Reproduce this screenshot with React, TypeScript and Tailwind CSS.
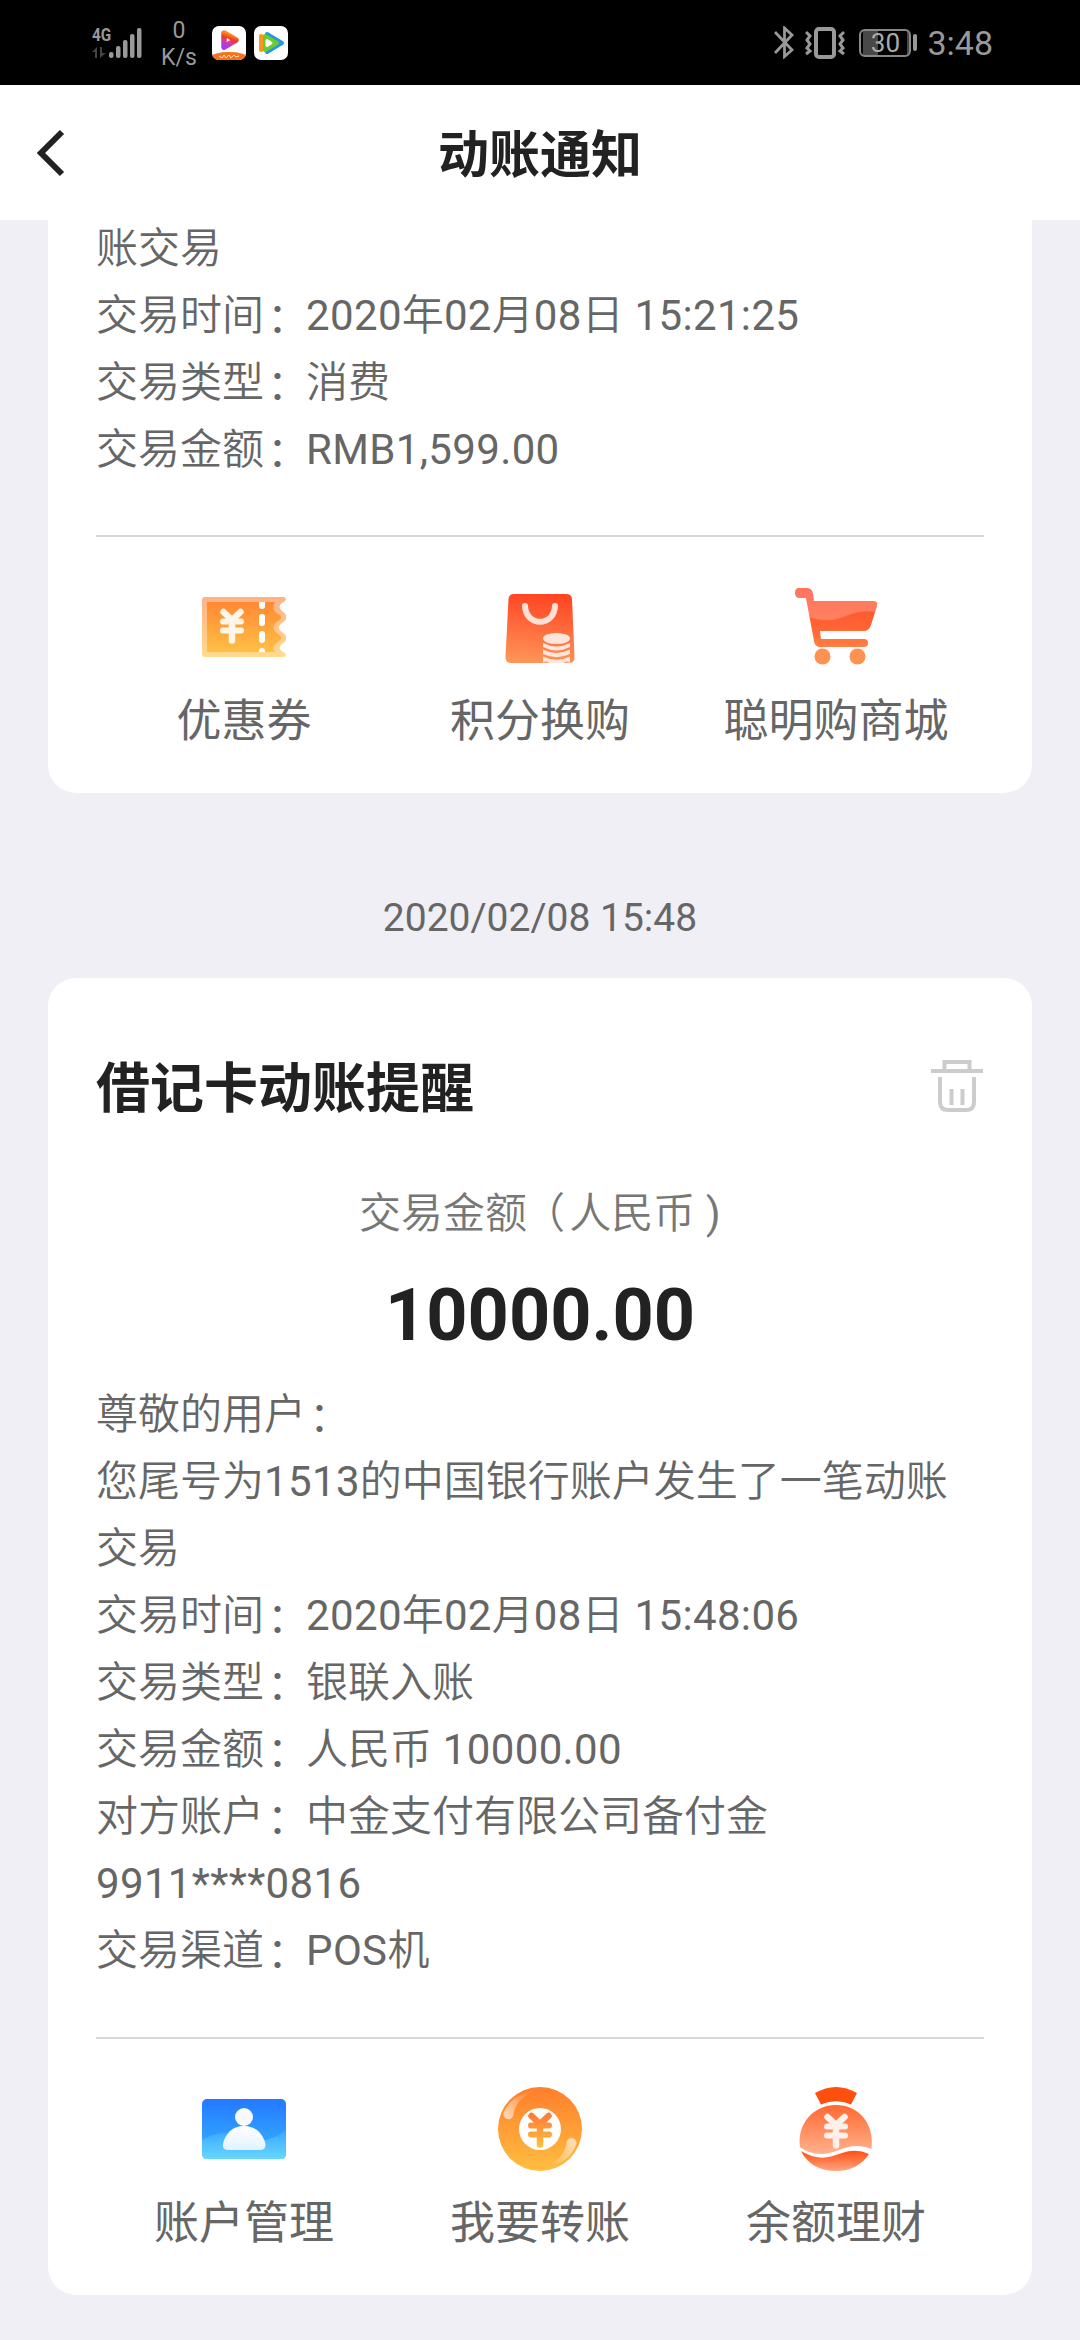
import { Fragment, type ReactNode } from "react"

type Action = {
  label: string
  icon: ReactNode
}

const SIGNAL_BARS = [
  { x: 0, y: 24, h: 6 },
  { x: 7, y: 18, h: 12 },
  { x: 14, y: 12, h: 18 },
  { x: 21, y: 6, h: 24 },
  { x: 28, y: 0, h: 30 },
]

const firstLines = [
  "账交易",
  "交易时间：2020年02月08日 15:21:25",
  "交易类型：消费",
  "交易金额：RMB1,599.00",
]

const secondLines = [
  "尊敬的用户：",
  "您尾号为1513的中国银行账户发生了一笔动账",
  "交易",
  "交易时间：2020年02月08日 15:48:06",
  "交易类型：银联入账",
  "交易金额：人民币 10000.00",
  "对方账户：中金支付有限公司备付金",
  "9911****0816",
  "交易渠道：POS机",
]

// Latin runs are tracked a little wider, full-width punctuation is nudged into place
function Mixed({ text }: { text: string }) {
  return (
    <>
      {text.split(/([\x20-\x7e]+|：|（)/).map((part, idx) => {
        if (idx % 2 === 0) return <Fragment key={idx}>{part}</Fragment>
        if (part === "：") return <span key={idx} className="inline-block translate-x-[3px] translate-y-[3px]">{part}</span>
        if (part === "（") return <span key={idx} className="mr-[4px] ml-[17px] inline-block [font-feature-settings:'halt']">{part}</span>
        return <span key={idx} className="tracking-[0.35px]">{part}</span>
      })}
    </>
  )
}

function Yen({ x, y, stroke }: { x: number; y: number; stroke: string }) {
  return (
    <g transform={`translate(${x} ${y})`} fill="none" stroke={stroke} strokeLinecap="round" strokeLinejoin="round">
      <path d="M-8.5 -14 L0 -6 L8.5 -14" strokeWidth="6.5" />
      <path d="M-9 -4.5 H9 M-9 4.5 H9" strokeWidth="6" />
      <path d="M0 -6 V14.5" strokeWidth="6.5" />
    </g>
  )
}

function CouponIcon() {
  return (
    <svg className="size-[84px]" viewBox="0 0 84 84">
      <defs>
        <linearGradient id="coupon" x1="0" y1="0" x2="0" y2="1">
          <stop offset="0" stopColor="#ff8833" />
          <stop offset="1" stopColor="#ffc044" />
        </linearGradient>
        <linearGradient id="couponEdge" x1="0" y1="0" x2="0" y2="1">
          <stop offset="0" stopColor="#ffb184" />
          <stop offset="1" stopColor="#ffdb8e" />
        </linearGradient>
      </defs>
      <path
        d="M3 12 H82 Q85 13 83 16 C77 19 76 22 80 26 C86 30 86 34 80 38 C76 41 76 44 80 47 C86 51 86 55 80 59 C76 63 77 65 83 68 Q85 71 82 72 H3 Q0 72 0 69 V15 Q0 12 3 12Z"
        fill="url(#couponEdge)"
      />
      <path
        d="M5 17 H73 C70 22 71 26 76 29 C80 31 80 34 76 36 C70 40 70 45 76 49 C80 52 80 54 76 57 C71 60 70 63 73 67 H5Z"
        fill="url(#coupon)"
      />
      <g fill="#fff">
        <path d="M57 17 h6 v4 a3 3 0 0 1 -6 0z M57 67 v-1 a3 3 0 0 1 6 0 v1z" />
        <rect x="57" y="29" width="6" height="12" rx="3" />
        <rect x="57" y="46" width="6" height="12" rx="3" />
      </g>
      <Yen x={30} y={41} stroke="#fff5ea" />
    </svg>
  )
}

function BagIcon() {
  return (
    <svg className="size-[84px]" viewBox="0 0 84 84">
      <defs>
        <linearGradient id="bag" x1="0.5" y1="0" x2="0.4" y2="1">
          <stop offset="0" stopColor="#ff4422" />
          <stop offset="1" stopColor="#ff9558" />
        </linearGradient>
      </defs>
      <path d="M16 9 H68 Q73.500 9 74 14 L76.500 72 Q76.500 78 71 78 H13 Q7.500 78 7.500 72 L10.500 14 Q11 9 16 9Z" fill="url(#bag)" />
      <path d="M27 21 C28 42 56 42 57 21" fill="none" stroke="#ffe0d6" strokeWidth="6" strokeLinecap="round" />
      <g fill="#ffe4da">
        <ellipse cx="58.500" cy="53.500" rx="13.500" ry="5.500" />
        <path d="M45 58 Q58.500 65 72 58 V62 Q58.500 69 45 62Z" />
        <path d="M45 64.500 Q58.500 71.500 72 64.500 V69 Q58.500 75.500 45 69Z" />
        <path d="M45 71.500 Q58.500 78 72 71.500 V78 H45Z" />
      </g>
      <path d="M45 77.500 Q48 75.500 51 78Z M66 78 Q69 75.500 72 77.500Z" fill="#ff8a55" />
    </svg>
  )
}

function CartIcon() {
  return (
    <svg className="size-[84px]" viewBox="0 0 84 84">
      <defs>
        <linearGradient id="cart" x1="0" y1="0" x2="0" y2="84" gradientUnits="userSpaceOnUse">
          <stop offset="0" stopColor="#ff4b30" />
          <stop offset="0.5" stopColor="#ff6334" />
          <stop offset="1" stopColor="#ff9f58" />
        </linearGradient>
      </defs>
      <path
        d="M5 3 H13 Q18 3 19 9 L20 16 H79 Q84 16 83 21 L77 40 Q75 46 70 46 H26 L27 54 H70 Q74 54 74 58 Q74 62 70 62 H26 Q21 62 20 56 L12 13 H6 Q1 13 1 8 Q1 3 5 3Z"
        fill="url(#cart)"
      />
      <path
        d="M5 3 H13 Q18 3 19 9 L20 16 H79 Q84 16 83 21 L81 27 C60 23 50 35 34 35 Q22 35 15.500 32 L12 13 H6 Q1 13 1 8 Q1 3 5 3Z"
        fill="#fff"
        opacity="0.22"
      />
      <circle cx="28.500" cy="71.500" r="8" fill="#ff9252" />
      <circle cx="63.500" cy="71.500" r="8" fill="#ff9252" />
    </svg>
  )
}

function AccountIcon() {
  return (
    <svg className="size-[84px]" viewBox="0 0 84 84">
      <defs>
        <linearGradient id="account" x1="0" y1="0" x2="0" y2="1">
          <stop offset="0" stopColor="#2478ff" />
          <stop offset="1" stopColor="#38b6ff" />
        </linearGradient>
        <linearGradient id="wave" x1="0" y1="0" x2="0" y2="1">
          <stop offset="0" stopColor="#3aa5ff" />
          <stop offset="1" stopColor="#66d8ff" />
        </linearGradient>
        <linearGradient id="person" x1="0" y1="0" x2="0" y2="1">
          <stop offset="0" stopColor="#ffffff" />
          <stop offset="1" stopColor="#e2f2ff" />
        </linearGradient>
      </defs>
      <rect y="12" width="84" height="60" rx="5" fill="url(#account)" />
      <path d="M0 53 C18 43 30 46 44 51 C60 56 73 52 84 43 V67 Q84 72 79 72 H5 Q0 72 0 67Z" fill="url(#wave)" />
      <circle cx="42" cy="30" r="9" fill="#f6faff" />
      <path d="M42 39 C54 39 61 47 63.500 57 Q64 63 58 63 H26 Q20 63 21 57 C23 47 30 39 42 39Z" fill="url(#person)" />
    </svg>
  )
}

function CoinIcon() {
  return (
    <svg className="size-[84px]" viewBox="0 0 84 84">
      <defs>
        <linearGradient id="coin" x1="0" y1="0" x2="0" y2="84" gradientUnits="userSpaceOnUse">
          <stop offset="0" stopColor="#ff7e2c" />
          <stop offset="1" stopColor="#ffbe40" />
        </linearGradient>
        <linearGradient id="yen" x1="0" y1="-17" x2="0" y2="17" gradientUnits="userSpaceOnUse">
          <stop offset="0" stopColor="#ff7838" />
          <stop offset="1" stopColor="#ffc03c" />
        </linearGradient>
        <linearGradient id="shineA" x1="10" y1="30" x2="34" y2="6" gradientUnits="userSpaceOnUse">
          <stop offset="0" stopColor="#fff" stopOpacity="0.6" />
          <stop offset="1" stopColor="#fff" stopOpacity="0" />
        </linearGradient>
        <linearGradient id="shineB" x1="74" y1="54" x2="50" y2="80" gradientUnits="userSpaceOnUse">
          <stop offset="0" stopColor="#fff" stopOpacity="0.6" />
          <stop offset="1" stopColor="#fff" stopOpacity="0" />
        </linearGradient>
      </defs>
      <circle cx="42" cy="42" r="42" fill="url(#coin)" />
      <path d="M6 25 C11 14 21 6 36 5 C24 9 17 17 15.500 27 A5 5 0 1 1 6 25Z" fill="url(#shineA)" />
      <path d="M78 58 C74 69 64 78 49 79 C60 74 67 66 68.500 57 A5 5 0 1 1 78 58Z" fill="url(#shineB)" />
      <circle cx="42" cy="42" r="21" fill="#fff" />
      <Yen x={42} y={43} stroke="url(#yen)" />
    </svg>
  )
}

function MoneyBagIcon() {
  return (
    <svg className="size-[84px]" viewBox="0 0 84 84">
      <defs>
        <linearGradient id="bagTop" x1="0" y1="18" x2="0" y2="66" gradientUnits="userSpaceOnUse">
          <stop offset="0" stopColor="#ff6830" />
          <stop offset="1" stopColor="#ffb08c" />
        </linearGradient>
        <linearGradient id="bagBase" x1="0" y1="63" x2="0" y2="84" gradientUnits="userSpaceOnUse">
          <stop offset="0" stopColor="#ff4a0c" />
          <stop offset="1" stopColor="#ffa683" />
        </linearGradient>
      </defs>
      <path d="M21 6 Q42 -6 63 6 L57 17.500 Q42 11 27 17.500Z" fill="#ff4f0c" />
      <path d="M6 60 C3 36 20 18 42 18 C64 18 81 36 77.500 62 C55 53 45 67 27 67 Q15 67 6 60Z" fill="url(#bagTop)" />
      <path d="M7 64 C25 74 34 71 48 66 Q62 61 75 67 C68 78 56 84 42 84 C26 84 13 77 7 64Z" fill="url(#bagBase)" />
      <Yen x={42} y={44} stroke="#fff0e9" />
    </svg>
  )
}

function TrashIcon() {
  return (
    <svg className="size-[54px]" viewBox="0 0 54 54" fill="none" stroke="#ccc" strokeWidth="4">
      <path d="M1 11 H53 M14.500 11 V2 H39.500 V11" />
      <path d="M10 17 V42 Q10 50 18 50 H36 Q44 50 44 42 V17" />
      <path d="M21.500 29 V45 M32.500 29 V45" />
    </svg>
  )
}

function StatusBar() {
  return (
    <div className="flex h-[85px] items-center bg-black pr-[87px] pl-[92px] text-[#999]">
      <div className="flex h-[30px] w-[51px] items-end">
        <div className="flex h-full w-[17px] flex-col justify-between">
          <span className="origin-left scale-x-[0.85] font-['Roboto'] text-[18px] leading-[14px] font-bold">4G</span>
          <svg className="h-[11px] w-[15px]" viewBox="0 0 15 11" fill="#444">
            <path d="M5 0 V11 H3 V5 H0Z M8 0 H10 V6 H14 L8 11Z" />
          </svg>
        </div>
        <svg className="h-[30px] w-[33px]" viewBox="0 0 33 30" fill="currentColor">
          {SIGNAL_BARS.map((bar) => (
            <rect key={bar.x} x={bar.x} y={bar.y} width="4.500" height={bar.h} rx="2" />
          ))}
        </svg>
      </div>
      <div className="ml-[16px] w-[40px] pt-[3px] text-center text-[23px] leading-[27px]">
        <p>0</p>
        <p>K/s</p>
      </div>
      <svg className="ml-[13px] size-[34px]" viewBox="0 0 34 34">
        <defs>
          <linearGradient id="play" x1="0" y1="1" x2="0.3" y2="0">
            <stop offset="0" stopColor="#a33cf2" />
            <stop offset="0.45" stopColor="#d93a9c" />
            <stop offset="0.65" stopColor="#f0362a" />
            <stop offset="1" stopColor="#ff8b1c" />
          </linearGradient>
          <clipPath id="tile">
            <rect width="34" height="34" rx="7" />
          </clipPath>
        </defs>
        <g clipPath="url(#tile)">
          <rect width="34" height="34" fill="#fff" />
          <path d="M12 7 L24 14 L12 21Z" fill="none" stroke="url(#play)" strokeWidth="5.500" strokeLinejoin="round" />
          <ellipse cx="17" cy="31" rx="18" ry="5" fill="#f4731c" />
          <path d="M7 30 l3 2 l2 -3 l2 3 l3 -3 l2 3 l3 -3 l2 2 l3 -1" fill="none" stroke="#ffe0b8" />
        </g>
      </svg>
      <svg className="ml-[8px] size-[34px]" viewBox="0 0 34 34" strokeLinejoin="round" strokeWidth="4">
        <rect width="34" height="34" rx="7" fill="#fff" />
        <path d="M13 8 L28 17 L13 26Z" fill="#2297e8" stroke="#2297e8" />
        <path d="M7 10 V24 L17 17Z" fill="#ff951c" stroke="#ff951c" />
        <path d="M11 10 L23 17 L11 24Z" fill="#6ccb2c" stroke="#6ccb2c" />
        <path d="M13 14.500 L17 17 L13 19.500Z" fill="#fff" stroke="#fff" strokeWidth="3" />
      </svg>
      <svg className="ml-auto h-[33px] w-[20px]" viewBox="0 0 20 33" fill="none" stroke="currentColor" strokeWidth="2.800">
        <path d="M1 6 L18 24 L10.500 30.500 V2 L18 9 L1 27" />
      </svg>
      <svg className="ml-[11px] h-[32px] w-[40px]" viewBox="0 0 40 32" fill="none" stroke="currentColor">
        <rect x="11" y="2" width="18" height="28" rx="3" strokeWidth="4" />
        <path d="M1 5 L5 9 L2 13 L5 17 L2 21 L5 24 L1 27" strokeWidth="3" />
        <path d="M39 5 L35 9 L38 13 L35 17 L38 21 L35 24 L39 27" strokeWidth="3" />
      </svg>
      <div className="ml-[14px] flex h-[28px] w-[52px] items-center justify-center rounded-[6px] border-2 border-[#888] bg-linear-to-r from-[#484848] from-[33%] to-transparent to-[33%] bg-origin-content p-[2px] text-[26px] leading-none text-[#aaa]">
        30
      </div>
      <div className="ml-[2px] h-[17px] w-[4px] rounded-sm bg-[#999]" />
      <span className="ml-[10px] text-[34px] leading-none">3:48</span>
    </div>
  )
}

function Lines({ lines }: { lines: string[] }) {
  return (
    <div className="font-['Roboto','Noto_Sans_CJK_SC_DemiLight','Noto_Sans_CJK_SC',sans-serif] text-[42px] leading-[67px] whitespace-nowrap text-[#666]">
      {lines.map((line) => (
        <p key={line} className="h-[67px]"><Mixed text={line} /></p>
      ))}
    </div>
  )
}

function Actions({ items }: { items: Action[] }) {
  return (
    <div className="mt-auto grid h-[258px] grid-cols-3 border-t-2 border-[#d3d7d6] pt-[48px]">
      {items.map((item) => (
        <div key={item.label} className="flex flex-col items-center">
          {item.icon}
          <span className="mt-[21px] text-[45px] leading-[64px] whitespace-nowrap text-[#666]">{item.label}</span>
        </div>
      ))}
    </div>
  )
}

export default function App() {
  return (
    <div className="flex h-[2340px] w-[1080px] flex-col overflow-hidden bg-[#efeff5] font-['Roboto','Noto_Sans_CJK_SC',sans-serif]">
      <StatusBar />

      {/* Title bar */}
      <header className="grid h-[135px] grid-cols-[1fr_auto_1fr] items-center bg-white text-[#222]">
        <svg className="ml-[36px] h-[48px] w-[30px]" viewBox="0 0 30 48" fill="none" stroke="currentColor" strokeWidth="6">
          <path d="M26 3 L5 24 L26 45" />
        </svg>
        <h1 className="pt-[6px] text-[51px] leading-none font-bold">动账通知</h1>
      </header>

      <main className="flex flex-col px-[48px]">
        {/* Card scrolled partly under the title bar */}
        <section className="flex h-[573px] flex-col rounded-b-[28px] bg-white px-[48px]">
          <div className="-mt-[5px]">
            <Lines lines={firstLines} />
          </div>
          <Actions
            items={[
              { label: "优惠券", icon: <CouponIcon /> },
              { label: "积分换购", icon: <BagIcon /> },
              { label: "聪明购商城", icon: <CartIcon /> },
            ]}
          />
        </section>

        <p className="mt-[95px] mb-[30px] text-center text-[39px] leading-[60px] text-[#666]">2020/02/08 15:48</p>

        <section className="flex h-[1317px] flex-col rounded-[28px] bg-white px-[48px] pt-[70px]">
          <div className="flex h-[78px] items-center justify-between">
            <h2 className="pt-[6px] text-[54px] leading-none font-bold text-[#222]">借记卡动账提醒</h2>
            <TrashIcon />
          </div>
          <p className="mt-[56px] h-[64px] text-center font-['Roboto','Noto_Sans_CJK_SC_DemiLight','Noto_Sans_CJK_SC',sans-serif] text-[42px] leading-[64px] text-[#777]">
            <Mixed text="交易金额（人民币 )" />
          </p>
          <p className="mt-[26px] mb-[21px] text-center text-[72px] leading-[88px] font-bold text-[#222]">10000.00</p>
          <Lines lines={secondLines} />
          <Actions
            items={[
              { label: "账户管理", icon: <AccountIcon /> },
              { label: "我要转账", icon: <CoinIcon /> },
              { label: "余额理财", icon: <MoneyBagIcon /> },
            ]}
          />
        </section>
      </main>
    </div>
  )
}
